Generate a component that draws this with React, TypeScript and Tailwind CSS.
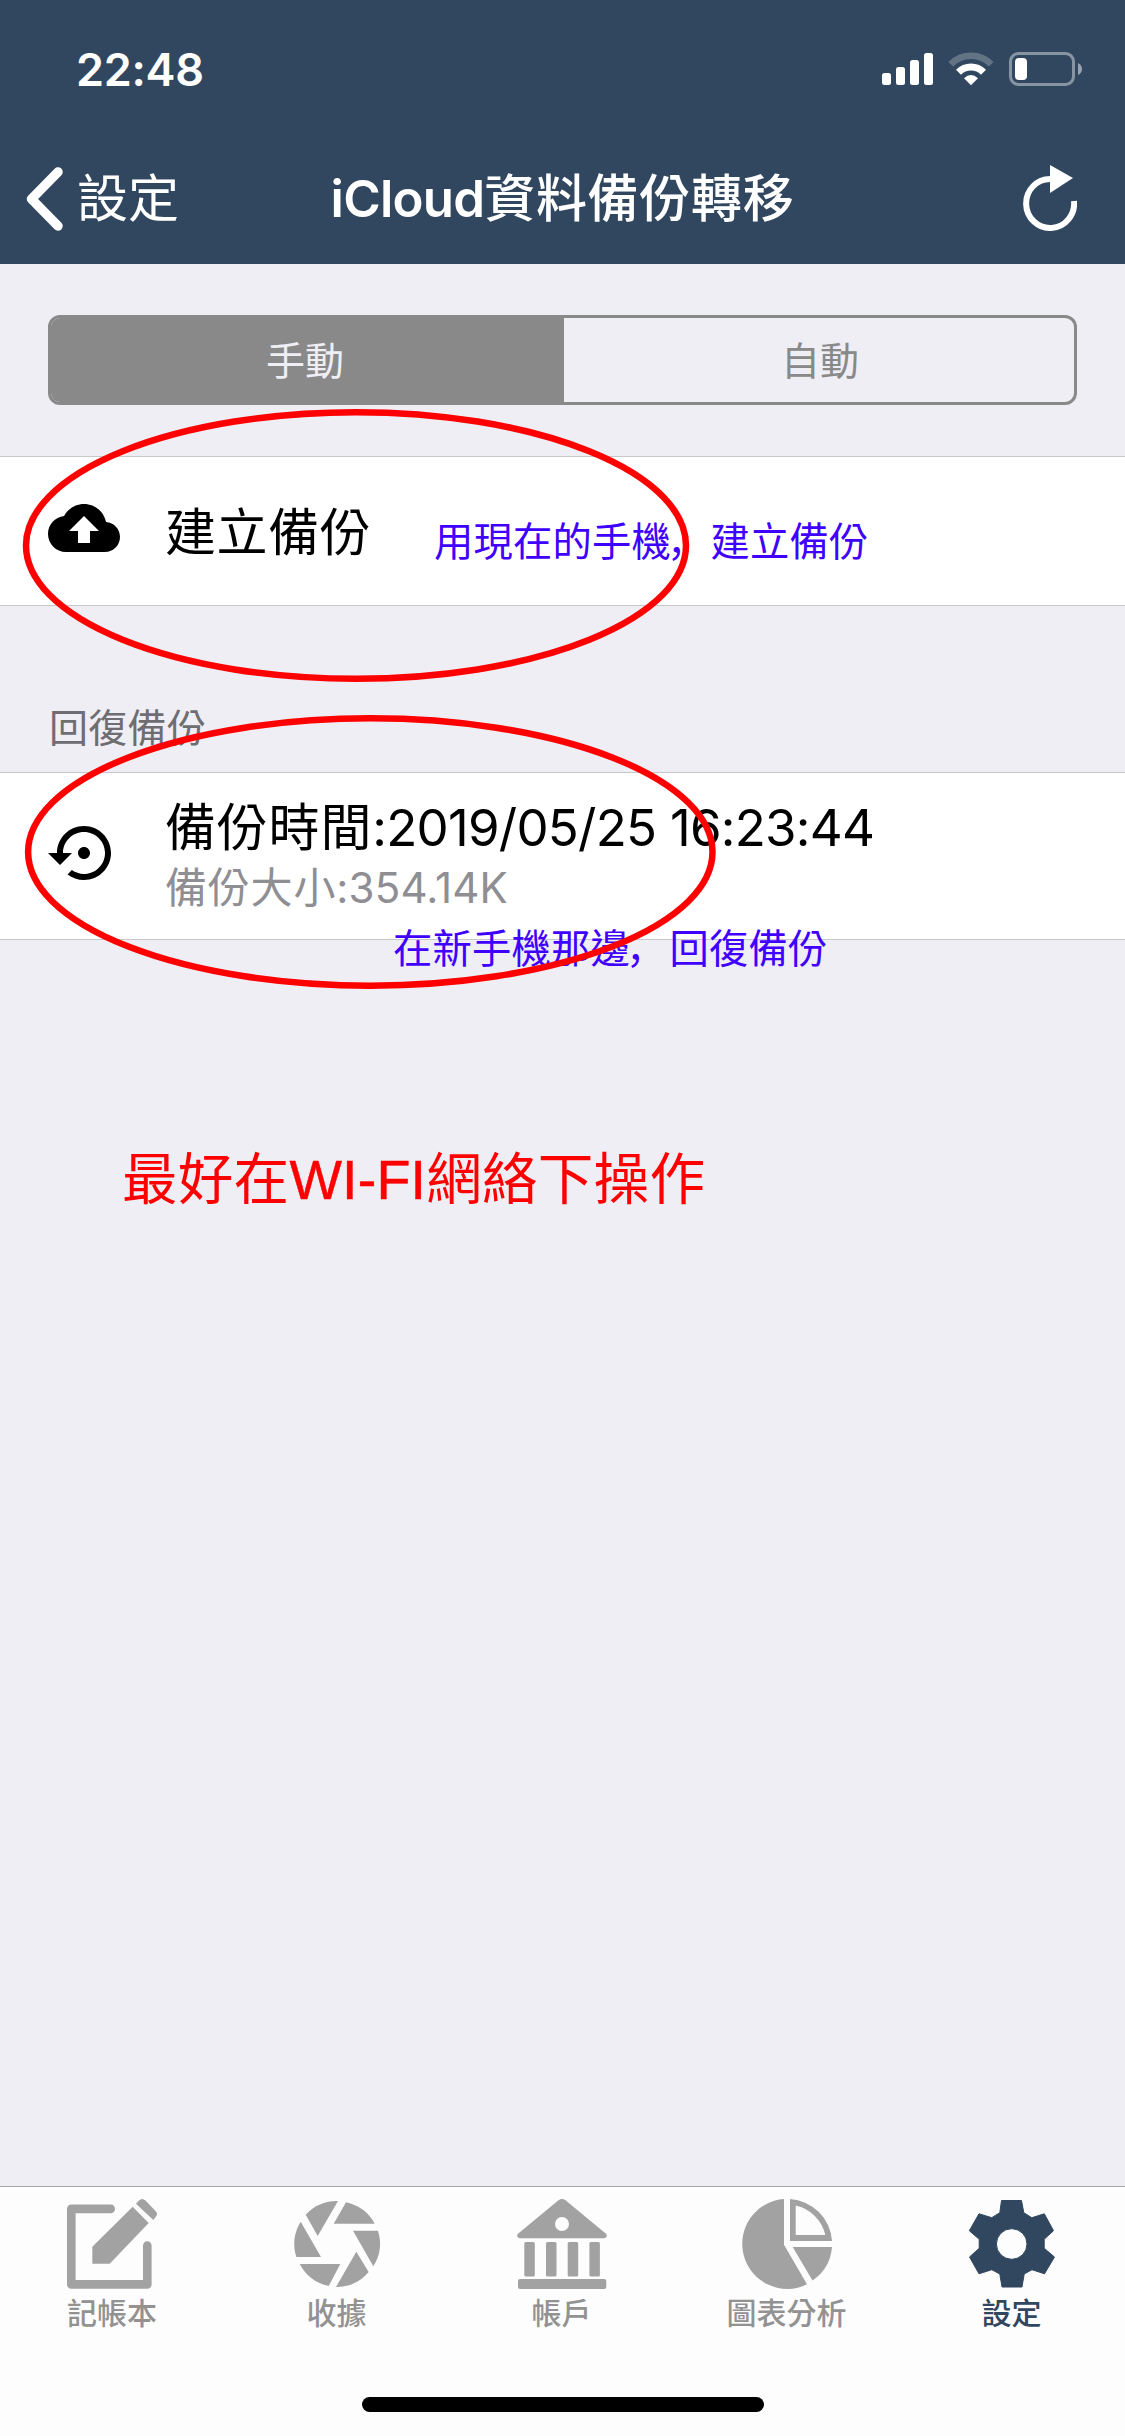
import type { ReactNode } from "react";

const Signal = () => (
  <svg width="51" height="34" viewBox="0 0 51 34" fill="white">
    <rect x="0" y="21" width="9" height="12" rx="2.5" />
    <rect x="14" y="15" width="9" height="18" rx="2.5" />
    <rect x="28" y="8" width="9" height="25" rx="2.5" />
    <rect x="42" y="1" width="9" height="32" rx="2.5" />
  </svg>
);

const Wifi = () => (
  <svg width="46" height="34" viewBox="0 0 46 34" fill="none" stroke="white">
    <path d="M2.8 12.2A28.3 28.3 0 0 1 43.2 12.2" strokeWidth="6.5" strokeOpacity="0.24" />
    <path d="M10.5 20.2A17.6 17.6 0 0 1 35.5 20.2" strokeWidth="7" />
    <path d="M16 26.2Q23 20 30 26.2L23 33.2Z" fill="white" stroke="none" />
  </svg>
);

const Battery = () => (
  <svg width="74" height="34" viewBox="0 0 74 34" fill="none">
    <rect x="1.5" y="1.5" width="63" height="31" rx="8" stroke="white" strokeOpacity="0.42" strokeWidth="3" />
    <rect x="6" y="6" width="12" height="22" rx="4" fill="white" />
    <path d="M69 11Q73 13 73 17T69 23Z" fill="white" fillOpacity="0.5" />
  </svg>
);

const CloudUpload = () => (
  <svg width="72" height="72" viewBox="0 0 24 24" fill="black">
    <path d="M19.35 10.04C18.67 6.59 15.64 4 12 4 9.11 4 6.6 5.64 5.35 8.04 2.34 8.36 0 10.91 0 14c0 3.31 2.69 6 6 6h13c2.76 0 5-2.24 5-5 0-2.64-2.05-4.78-4.65-4.96zM14 13v4h-4v-4H7l5-5 5 5h-3z" />
  </svg>
);

const Restore = () => (
  <svg width="72" height="72" viewBox="0 0 24 24" fill="black">
    <path d="M14 12c0-1.1-.9-2-2-2s-2 .9-2 2 .9 2 2 2 2-.9 2-2zm-2-9c-4.97 0-9 4.03-9 9H0l4 4 4-4H5c0-3.87 3.13-7 7-7s7 3.13 7 7-3.13 7-7 7c-1.51 0-2.91-.49-4.06-1.3l-1.42 1.44C8.04 20.3 9.94 21 12 21c4.97 0 9-4.03 9-9s-4.03-9-9-9z" />
  </svg>
);

const NoteIcon = () => (
  <>
    <path d="M43.7 9.9H4.3V85.4H80.3V46.5" fill="none" stroke="currentColor" strokeWidth="8.6" strokeLinecap="round" strokeLinejoin="round" />
    <path d="M65.7 7.7L81.7 24 42.7 64.7H25.3V47.7Z" />
    <path d="M69 4.8L72 1.5Q75-1.500 78.500 1.500L89 12.500Q91 15 89 17.500L86.300 21Z" />
  </>
);

const ApertureIcon = () => (
  <>
    <path d="M46 2L25.700 37 13.700 15.700A43 43 0 0 1 46 2Z" />
    <path d="M54 3.300L41.700 24.700H82.700A43 43 0 0 0 54 3.300Z" />
    <path d="M61 31.700H86A43 43 0 0 1 81.300 67.300Z" />
    <path d="M64.300 52.700L76.700 73A43 43 0 0 1 44 88Z" />
    <path d="M48.300 65L36.700 87A43 43 0 0 1 7.700 65Z" />
    <path d="M29 58H4.300A43 43 0 0 1 8.700 22.700Z" />
  </>
);

const BankIcon = () => (
  <>
    <path fillRule="evenodd" d="M41.500 1.300Q45-1.200 48.500 1.300L89.300 35Q91 38 87.500 39.200H2.500Q-1 38 .7 35ZM52 25a7 7 0 1 0-14 0a7 7 0 1 0 14 0Z" />
    <rect x="7.300" y="43" width="10.500" height="34.500" rx="1.500" />
    <rect x="29" y="43" width="10.500" height="34.500" rx="1.500" />
    <rect x="50.700" y="43" width="10.500" height="34.500" rx="1.500" />
    <rect x="72.400" y="43" width="10.500" height="34.500" rx="1.500" />
    <rect x="1" y="80" width="88.300" height="10" rx="2" />
  </>
);

const PieIcon = () => (
  <>
    <path d="M42 0V45.700L65 85.300A45 45 0 1 1 42 0Z" />
    <path fillRule="evenodd" d="M48 0A45 45 0 0 1 90 42H48ZM53.700 6.500V36H83.300A39 39 0 0 0 53.700 6.500Z" />
    <path d="M50.700 48H90A45 45 0 0 1 70.500 81.500Z" />
  </>
);

const GearIcon = () => (
  <path
    fillRule="evenodd"
    stroke="currentColor"
    strokeWidth="1"
    strokeLinejoin="round"
    d="M34.500 1.500H54.500L56.800 13.700 64.800 18.700 77.300 14.800 86.500 31.700 77.200 40.300V49.300L87.500 58 77.500 74.800 65 70.700 57.200 75 55 88H35L32.800 75 24.800 70.700 12 74.800 2.500 58 12.200 49.300V40.300L2.300 31.700 12 14.800 24.800 18.700 32.800 13.700ZM60 45a15.300 15.300 0 1 0-30.600 0a15.300 15.300 0 1 0 30.600 0Z"
  />
);

const tabs: { label: string; icon: ReactNode; active?: boolean }[] = [
  { label: "記帳本", icon: <NoteIcon /> },
  { label: "收據", icon: <ApertureIcon /> },
  { label: "帳戶", icon: <BankIcon /> },
  { label: "圖表分析", icon: <PieIcon /> },
  { label: "設定", icon: <GearIcon />, active: true },
];

const Comma = () => <span lang="zh-CN" className="mr-[4px] ml-[-4px] font-['Noto_Sans_CJK_SC',sans-serif]">，</span>;

function Header() {
  return (
    <header className="h-[264px] bg-[#31475f] text-white">
      <div className="flex h-[138px] items-center justify-between pr-[42px] pl-[76px]">
        <span className="text-[45px] leading-none font-semibold tracking-[-0.3px]">22:48</span>
        <div className="flex items-center">
          <Signal />
          <span className="ml-[15px]"><Wifi /></span>
          <span className="ml-[15px]"><Battery /></span>
        </div>
      </div>
      <div className="grid h-[126px] grid-cols-[1fr_auto_1fr] items-center px-[26px]">
        <div className="flex items-center">
          <svg width="38" height="64" viewBox="0 0 38 64" fill="none" stroke="white" strokeWidth="9.500" strokeLinecap="round" strokeLinejoin="round" className="mt-[-5px]">
            <path d="M32 5L5.500 32 32 59" />
          </svg>
          <span className="mt-[-6px] ml-[13px] text-[51px] leading-none">設定</span>
        </div>
        <h1 className="mt-[-6px] text-[51px] leading-none font-semibold">
          <span className="tracking-[-0.8px]">iCloud</span>
          <span className="font-medium tracking-[0.7px]">資料備份轉移</span>
        </h1>
        <svg width="54" height="66" viewBox="0 0 54 66" className="mt-[-7px] mr-[22px] justify-self-end">
          <path d="M27.500 14A24 24.500 0 1 0 51 36" fill="none" stroke="white" strokeWidth="6" />
          <path d="M27 0L50 13 27 28Z" fill="white" />
        </svg>
      </div>
    </header>
  );
}

export default function App() {
  return (
    <div className="relative flex h-[2436px] w-[1125px] flex-col overflow-hidden bg-[#efeef4] font-[Inter,'Noto_Sans_CJK_TC',sans-serif] text-black">
      <Header />
      <main className="flex-1">
        <div className="mx-12 mt-[51px] grid h-[90px] grid-cols-[513px_1fr] overflow-hidden rounded-[12px] border-[3px] border-[#898989] text-[39px] leading-none">
          <div className="flex items-center justify-center bg-[#898989] pr-[5px] text-[#efeef4]">手動</div>
          <div className="flex items-center justify-center pl-[2px] text-[#898989]">自動</div>
        </div>

        <section className="mt-[51px] flex h-[150px] items-center border-y border-[#c8c7cc] bg-white pl-12">
          <span className="mt-[-6px]"><CloudUpload /></span>
          <span className="mt-[2px] ml-[45px] text-[51px] leading-none tracking-[0.6px]">建立備份</span>
        </section>

        <h2 className="mt-[102px] ml-[49px] text-[39px] leading-[39px] tracking-[0.3px] text-[#6d6d72]">回復備份</h2>

        <section className="mt-[25px] flex h-[168px] items-center border-y border-[#c8c7cc] bg-white pl-12">
          <span className="mt-[-6px]"><Restore /></span>
          <div className="mt-[3px] ml-[45px]">
            <div className="text-[51px] leading-[60px] tracking-[0.8px]">
              備份時間<span className="tracking-[-0.75px]">:2019/05/25 16:23:44</span>
            </div>
            <div className="text-[42px] leading-[60px] tracking-[0.8px] text-[#8e8e93]">
              備份大小<span className="tracking-[0.2px]">:354.14K</span>
            </div>
          </div>
        </section>
      </main>

      <nav className="h-[250px] border-t border-[#a7a7ab] bg-[#fdfdfd]">
        <div className="grid grid-cols-[224px_225px_225px_225px_225px] pt-3">
          {tabs.map((tab) => (
            <div key={tab.label} className={tab.active ? "flex flex-col items-center text-[#31475f]" : "flex flex-col items-center text-[#a2a2a2]"}>
              <svg width="90" height="90" viewBox="0 0 90 90" fill="currentColor" className="overflow-visible">{tab.icon}</svg>
              <span className={tab.active ? "mt-[9px] text-[30px] leading-[30px] font-medium" : "mt-[9px] text-[30px] leading-[30px] font-medium text-[#929292]"}>{tab.label}</span>
            </div>
          ))}
        </div>
        <div className="mx-auto mt-[69px] h-[15px] w-[402px] rounded-full bg-black" />
      </nav>

      {/* Hand-placed notes and rings drawn over the screen */}
      <p className="absolute top-[519px] left-[434px] text-[39.300px] leading-[40px] tracking-[0.2px] whitespace-nowrap text-[#4000ff]">用現在的手機<Comma />建立備份</p>
      <p className="absolute top-[926px] left-[393px] text-[39.300px] leading-[40px] tracking-[0.2px] whitespace-nowrap text-[#4000ff]">在新手機那邊<Comma />回復備份</p>
      <p className="absolute top-[1152px] left-[122px] font-['Liberation_Sans','Noto_Sans_CJK_TC',sans-serif] text-[55.600px] leading-[56px] tracking-[0.2px] whitespace-nowrap text-[#ff0000]">最好在<span className="[-webkit-text-stroke:0.5px_#ff0000]">WI-FI</span>網絡下操作</p>
      <svg className="absolute top-0 left-0" width="1125" height="1100" fill="none" stroke="#ff0000" strokeWidth="6.500">
        <ellipse cx="356" cy="545.500" rx="330" ry="133.300" />
        <ellipse cx="370.300" cy="852" rx="342.200" ry="133.700" />
      </svg>
    </div>
  );
}
